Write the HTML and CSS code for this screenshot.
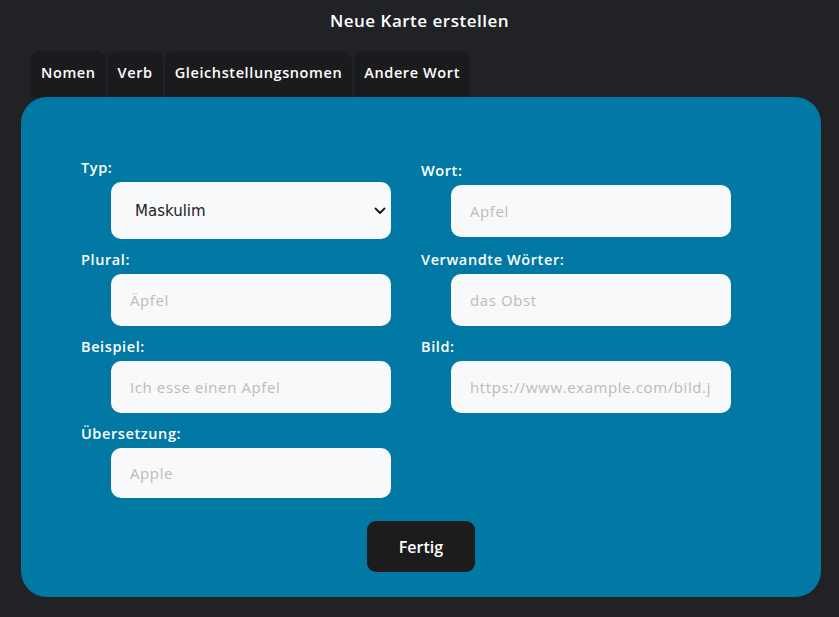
FILE: index.html
```html
<!DOCTYPE html>
<html lang="de">
<head>
<meta charset="utf-8">
<title>Neue Karte erstellen</title>
<link rel="stylesheet" href="styles.css">
</head>
<body>
<h1 class="title">Neue Karte erstellen</h1>
<nav class="tabs">
  <button class="tab">Nomen</button>
  <button class="tab">Verb</button>
  <button class="tab">Gleichstellungsnomen</button>
  <button class="tab">Andere Wort</button>
</nav>
<form class="panel">
  <div class="grid">
    <div class="field">
      <label class="label">Typ:</label>
      <div class="select-wrap">
        <select class="select">
          <option>Maskulim</option>
          <option>Feminim</option>
          <option>Neutrum</option>
        </select>
        <svg class="chevron" width="12" height="8" viewBox="0 0 12 8"><path d="M1.5 1.5 L6 6 L10.5 1.5" fill="none" stroke="#222" stroke-width="2" stroke-linecap="round" stroke-linejoin="round"/></svg>
      </div>
    </div>
    <div class="field">
      <label class="label">Wort:</label>
      <input class="input" placeholder="Apfel">
    </div>
    <div class="field">
      <label class="label">Plural:</label>
      <input class="input" placeholder="Äpfel">
    </div>
    <div class="field">
      <label class="label">Verwandte Wörter:</label>
      <input class="input" placeholder="das Obst">
    </div>
    <div class="field">
      <label class="label">Beispiel:</label>
      <input class="input" placeholder="Ich esse einen Apfel">
    </div>
    <div class="field">
      <label class="label">Bild:</label>
      <input class="input" placeholder="https://www.example.com/bild.jpg">
    </div>
    <div class="field">
      <label class="label">Übersetzung:</label>
      <input class="input last" placeholder="Apple">
    </div>
  </div>
  <div class="actions">
    <button type="button" class="done">Fertig</button>
  </div>
</form>
</body>
</html>
```
FILE: styles.css
```css
* { box-sizing: border-box; }
html, body { margin: 0; }
body {
  background: #212226;
  font-family: "Open Sans", "Noto Sans", sans-serif;
  color: #fff;
  width: 839px;
  height: 617px;
  overflow: hidden;
}
.title {
  margin: 8px 0 0;
  font-size: 17px;
  line-height: 26px;
  font-weight: 600;
  letter-spacing: 0.5px;
  text-align: center;
}
.tabs {
  display: flex;
  gap: 2px;
  margin: 17px 0 0 31px;
}
.tab {
  background: #1b1b1d;
  color: #fff;
  border: 0;
  border-radius: 9px 9px 0 0;
  height: 46px;
  padding: 0 10px 4px;
  font-family: inherit;
  font-size: 14.5px;
  font-weight: 600;
  letter-spacing: 0.6px;
}
.panel {
  width: 800px;
  margin-left: 21px;
  background: #0179a4;
  border-radius: 26px;
  padding: 61px 60px 25px;
}
.grid {
  display: grid;
  grid-template-columns: 340px 340px;
  align-items: center;
}
.field { padding-bottom: 11px; }
.label {
  display: block;
  font-size: 14.5px;
  line-height: 20px;
  font-weight: 600;
  letter-spacing: 0.6px;
  margin-bottom: 4px;
}
.input, .select {
  display: block;
  width: 280px;
  margin-left: 30px;
  background: #f8f9fa;
  border: 0;
  border-radius: 10px;
  outline: none;
}
.input {
  height: 52px;
  padding: 0 19px;
  font-family: inherit;
  font-size: 15px;
  letter-spacing: 0.6px;
  color: #222;
}
.input.last { height: 50px; }
.input::placeholder { color: #bdbaba; }
.select-wrap { position: relative; }
.select {
  height: 57px;
  padding: 0 24px;
  appearance: none;
  font-family: "DejaVu Sans", sans-serif;
  font-size: 15px;
  color: #222;
}
.chevron {
  position: absolute;
  left: 293px;
  top: 25px;
}
.actions {
  display: flex;
  justify-content: center;
  padding-top: 12px;
}
.done {
  width: 108px;
  height: 51px;
  background: #1c1c1c;
  color: #fff;
  border: 0;
  border-radius: 9px;
  font-family: inherit;
  font-size: 16px;
  font-weight: 600;
}
```
